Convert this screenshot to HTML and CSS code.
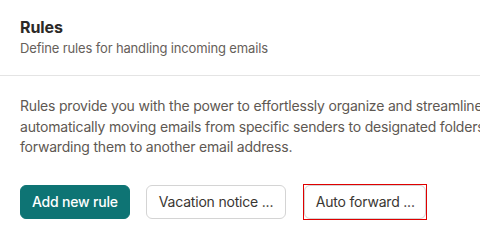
FILE: index.html
```html
<!DOCTYPE html>
<html lang="en">
<head>
    <meta charset="UTF-8">
    <meta name="viewport" content="width=device-width, initial-scale=1.0">
    <title>Rules</title>
    <link rel="stylesheet" href="styles.css">
</head>
<body>

<div class="page-head">
    <h1 class="title">Rules</h1>
    <div class="subtitle">Define rules for handling incoming emails</div>
</div>

<div class="content">
    <p class="intro">Rules provide you with the power to effortlessly organize and streamline your inbox, automatically moving emails from specific senders to designated folders or forwarding them to another email address.</p>

    <div class="actions">
        <button class="btn btn-primary">Add new rule</button>
        <button class="btn">Vacation notice ...</button>
        <span class="focus-ring"><button class="btn btn-small">Auto forward ...</button></span>
    </div>
</div>

</body>
</html>
```

FILE: styles.css
```css
body { margin: 0; background: #fff; font-family: Inter, "Noto Sans", sans-serif; color: #2d2a27; overflow: hidden; }
.page-head { padding: 17px 20px 18px; border-bottom: 1px solid #e4e4e4; }
.title { margin: 0; font-size: 16px; line-height: 20px; font-weight: 700; color: #2b2927; letter-spacing: -0.1px; }
.subtitle { margin-top: 2px; font-size: 13px; line-height: 18px; color: #66605a; letter-spacing: -0.15px; }
.content { padding: 20px 20px; width: 542px; }
.intro { margin: 0 0 26px; font-size: 14px; line-height: 20.5px; color: #5e5852; letter-spacing: -0.2px; }
.actions { display: flex; align-items: center; gap: 16px; }
.btn { height: 34px; padding: 0 12px; border: 1px solid #d4d4d4; border-radius: 6px; background: #fff; color: #3a3632; font-family: inherit; font-size: 14px; letter-spacing: -0.2px; cursor: pointer; }
.btn-primary { padding: 0 11px; background: #0e7474; border-color: #0e7474; color: #fff; font-weight: 500; }
.btn-small { padding: 0 10.5px; }
.focus-ring { display: inline-flex; margin-left: 1px; border: 1px solid #e00000; }
```
